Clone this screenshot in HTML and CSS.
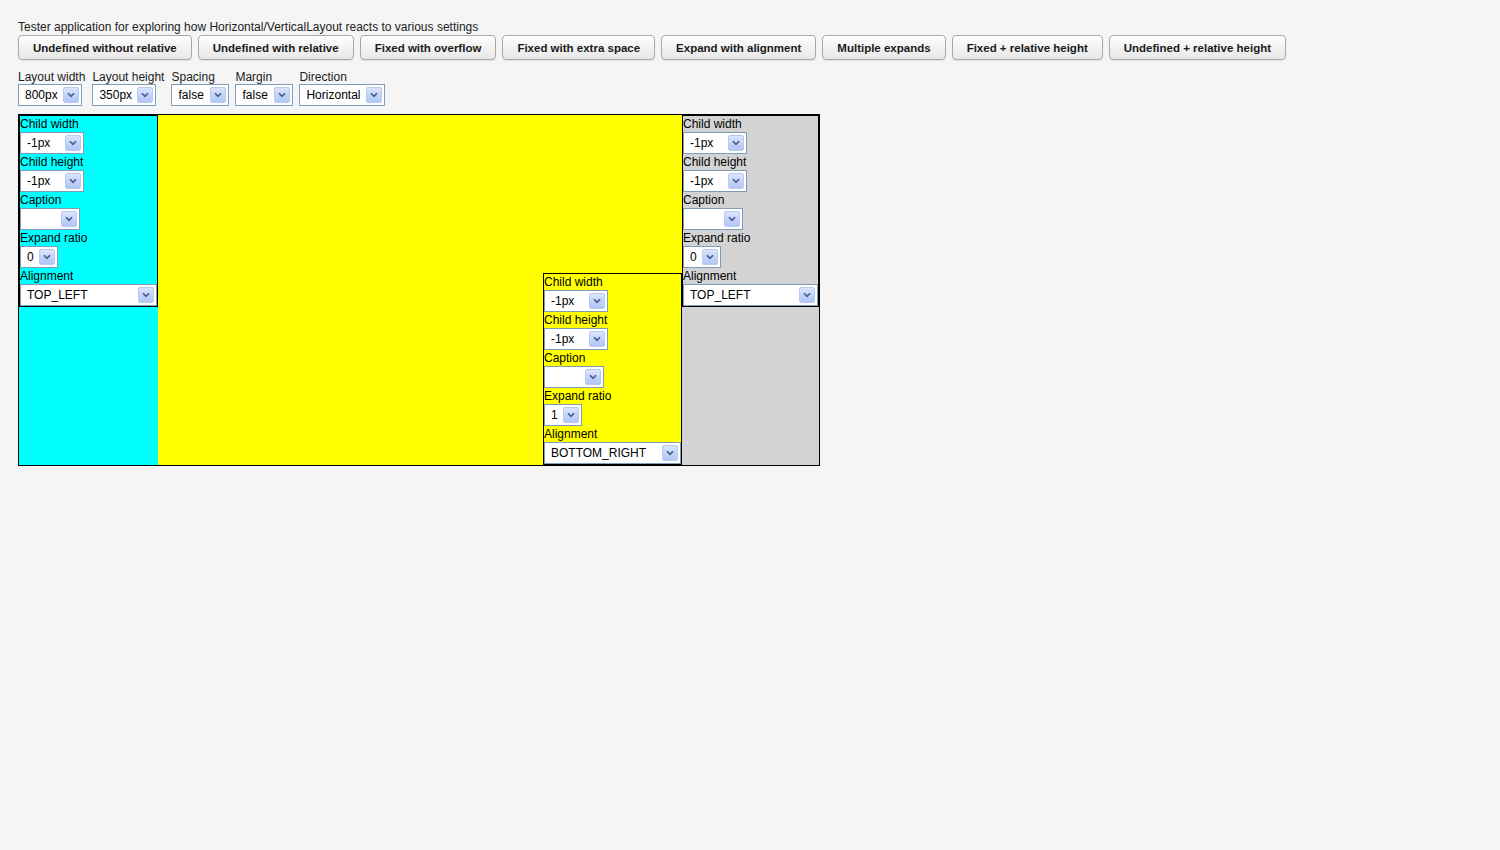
FILE: index.html
```html
<!DOCTYPE html>
<html>
<head>
<meta charset="utf-8">
<title>Layout tester</title>
<link rel="stylesheet" href="styles.css">
</head>
<body>
<div class="app">
  <div class="title">Tester application for exploring how Horizontal/VerticalLayout reacts to various settings</div>
  <div class="buttons">
    <button class="btn">Undefined without relative</button>
    <button class="btn">Undefined with relative</button>
    <button class="btn">Fixed with overflow</button>
    <button class="btn">Fixed with extra space</button>
    <button class="btn">Expand with alignment</button>
    <button class="btn">Multiple expands</button>
    <button class="btn">Fixed + relative height</button>
    <button class="btn">Undefined + relative height</button>
  </div>
  <div class="settings">
    <div class="field"><div class="lbl">Layout width</div><div class="combo w64"><span class="val">800px</span><span class="arrow"><svg viewBox="0 0 16 16"><polyline points="4.5,6 8,9.5 11.5,6"/></svg></span></div></div>
    <div class="field"><div class="lbl">Layout height</div><div class="combo w64"><span class="val">350px</span><span class="arrow"><svg viewBox="0 0 16 16"><polyline points="4.5,6 8,9.5 11.5,6"/></svg></span></div></div>
    <div class="field"><div class="lbl">Spacing</div><div class="combo w58"><span class="val">false</span><span class="arrow"><svg viewBox="0 0 16 16"><polyline points="4.5,6 8,9.5 11.5,6"/></svg></span></div></div>
    <div class="field"><div class="lbl">Margin</div><div class="combo w58"><span class="val">false</span><span class="arrow"><svg viewBox="0 0 16 16"><polyline points="4.5,6 8,9.5 11.5,6"/></svg></span></div></div>
    <div class="field"><div class="lbl">Direction</div><div class="combo w86"><span class="val">Horizontal</span><span class="arrow"><svg viewBox="0 0 16 16"><polyline points="4.5,6 8,9.5 11.5,6"/></svg></span></div></div>
  </div>
  <div class="layout">
    <div class="slot slot1">
      <div class="child">
        <div class="clbl">Child width</div>
        <div class="combo w64"><span class="val">-1px</span><span class="arrow"><svg viewBox="0 0 16 16"><polyline points="4.5,6 8,9.5 11.5,6"/></svg></span></div>
        <div class="clbl">Child height</div>
        <div class="combo w64"><span class="val">-1px</span><span class="arrow"><svg viewBox="0 0 16 16"><polyline points="4.5,6 8,9.5 11.5,6"/></svg></span></div>
        <div class="clbl">Caption</div>
        <div class="combo w60"><span class="val"></span><span class="arrow"><svg viewBox="0 0 16 16"><polyline points="4.5,6 8,9.5 11.5,6"/></svg></span></div>
        <div class="clbl">Expand ratio</div>
        <div class="combo w38"><span class="val">0</span><span class="arrow"><svg viewBox="0 0 16 16"><polyline points="4.5,6 8,9.5 11.5,6"/></svg></span></div>
        <div class="clbl">Alignment</div>
        <div class="combo wfull"><span class="val">TOP_LEFT</span><span class="arrow"><svg viewBox="0 0 16 16"><polyline points="4.5,6 8,9.5 11.5,6"/></svg></span></div>
      </div>
    </div>
    <div class="slot slot2">
      <div class="child">
        <div class="clbl">Child width</div>
        <div class="combo w64"><span class="val">-1px</span><span class="arrow"><svg viewBox="0 0 16 16"><polyline points="4.5,6 8,9.5 11.5,6"/></svg></span></div>
        <div class="clbl">Child height</div>
        <div class="combo w64"><span class="val">-1px</span><span class="arrow"><svg viewBox="0 0 16 16"><polyline points="4.5,6 8,9.5 11.5,6"/></svg></span></div>
        <div class="clbl">Caption</div>
        <div class="combo w60"><span class="val"></span><span class="arrow"><svg viewBox="0 0 16 16"><polyline points="4.5,6 8,9.5 11.5,6"/></svg></span></div>
        <div class="clbl">Expand ratio</div>
        <div class="combo w38"><span class="val">1</span><span class="arrow"><svg viewBox="0 0 16 16"><polyline points="4.5,6 8,9.5 11.5,6"/></svg></span></div>
        <div class="clbl">Alignment</div>
        <div class="combo wfull"><span class="val">BOTTOM_RIGHT</span><span class="arrow"><svg viewBox="0 0 16 16"><polyline points="4.5,6 8,9.5 11.5,6"/></svg></span></div>
      </div>
    </div>
    <div class="slot slot3">
      <div class="child">
        <div class="clbl">Child width</div>
        <div class="combo w64"><span class="val">-1px</span><span class="arrow"><svg viewBox="0 0 16 16"><polyline points="4.5,6 8,9.5 11.5,6"/></svg></span></div>
        <div class="clbl">Child height</div>
        <div class="combo w64"><span class="val">-1px</span><span class="arrow"><svg viewBox="0 0 16 16"><polyline points="4.5,6 8,9.5 11.5,6"/></svg></span></div>
        <div class="clbl">Caption</div>
        <div class="combo w60"><span class="val"></span><span class="arrow"><svg viewBox="0 0 16 16"><polyline points="4.5,6 8,9.5 11.5,6"/></svg></span></div>
        <div class="clbl">Expand ratio</div>
        <div class="combo w38"><span class="val">0</span><span class="arrow"><svg viewBox="0 0 16 16"><polyline points="4.5,6 8,9.5 11.5,6"/></svg></span></div>
        <div class="clbl">Alignment</div>
        <div class="combo wfull"><span class="val">TOP_LEFT</span><span class="arrow"><svg viewBox="0 0 16 16"><polyline points="4.5,6 8,9.5 11.5,6"/></svg></span></div>
      </div>
    </div>
  </div>
</div>
</body>
</html>
```

FILE: styles.css
```css
html, body {
  margin: 0;
  padding: 0;
  background: #f5f5f5;
  font-family: "Liberation Sans", Arial, sans-serif;
  font-size: 12px;
  color: #222;
}

.app {
  padding: 20px 18px 0 18px;
}

.title {
  line-height: 14px;
  height: 13px;
}

.buttons {
  display: flex;
  gap: 6px;
  margin-top: 2px;
}

.btn {
  margin: 0;
  height: 25px;
  padding: 0 14px;
  border: 1px solid #a9a9a9;
  border-radius: 4px;
  background: linear-gradient(#ffffff, #f2f2f2 50%, #e8e8e8);
  font-family: "Liberation Sans", Arial, sans-serif;
  font-weight: bold;
  font-size: 11.5px;
  color: #1a1a1a;
  box-shadow: 0 1px 1px rgba(0,0,0,0.08);
}

.settings {
  display: flex;
  gap: 6px;
  margin-top: 9px;
}

.field {
  display: flex;
  flex-direction: column;
}

.lbl {
  line-height: 17px;
  height: 15px;
  padding-right: 1px;
  white-space: nowrap;
}

.combo {
  display: flex;
  align-items: center;
  box-sizing: border-box;
  height: 22px;
  border: 1px solid #7f9db9;
  background: #fff;
  padding: 0 2px 0 6px;
  color: #000;
  font-size: 12px;
}

.combo .val {
  flex: 1;
  white-space: nowrap;
  overflow: hidden;
}

.combo .arrow {
  flex: none;
  width: 16px;
  height: 16px;
  box-sizing: border-box;
  border: 1px solid #b9c9f1;
  border-radius: 2px;
  background: linear-gradient(#dbe5fe, #c3d4fb 50%, #b2c7f6);
  display: flex;
}

.combo .arrow svg {
  width: 14px;
  height: 14px;
}

.combo .arrow polyline {
  fill: none;
  stroke: #4a5e86;
  stroke-width: 2;
}

.w64 { width: 64px; }
.w58 { width: 58px; }
.w86 { width: 86px; }
.w60 { width: 60px; }
.w38 { width: 38px; }
.wfull { width: 100%; }

.layout {
  display: flex;
  width: 800px;
  height: 350px;
  border: 1px solid #000;
  margin-top: 8px;
}

.slot {
  display: flex;
  flex-direction: column;
  overflow: hidden;
}

.slot1 {
  width: 139px;
  background: #00ffff;
}

.slot2 {
  flex: 1;
  background: #ffff00;
  align-items: flex-end;
  justify-content: flex-end;
}

.slot3 {
  width: 137px;
  background: #d3d3d3;
}

.child {
  box-sizing: border-box;
  width: 139px;
  border: 1px solid #000;
  display: flex;
  flex-direction: column;
  align-items: flex-start;
}

.slot3 .child {
  width: 137px;
}

.clbl {
  line-height: 16px;
  height: 16px;
  color: #000;
  white-space: nowrap;
}
```
